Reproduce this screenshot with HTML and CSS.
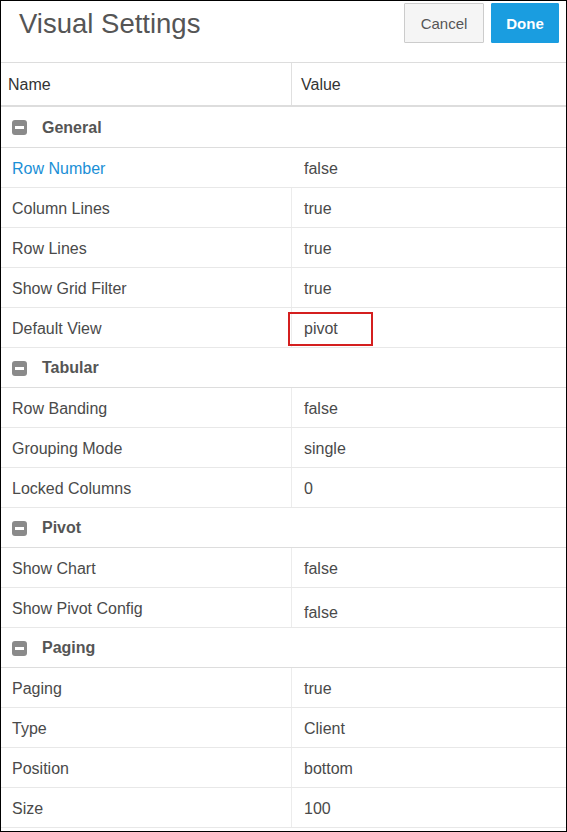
FILE: index.html
```html
<!DOCTYPE html>
<html>
<head>
<meta charset="utf-8">
<link rel="stylesheet" href="styles.css">
</head>
<body>
<div class="dialog">
  <div class="header">
    <div class="title">Visual Settings</div>
    <div class="actions">
      <button class="btn btn-cancel">Cancel</button>
      <button class="btn btn-done">Done</button>
    </div>
  </div>
  <div class="grid">
    <div class="thead">
      <div class="th th-name">Name</div>
      <div class="th th-value">Value</div>
    </div>

    <div class="group group-first"><span class="toggle"></span><span class="group-label">General</span></div>
    <div class="row row-active"><div class="c-name link">Row Number</div><div class="c-value">false</div></div>
    <div class="row"><div class="c-name">Column Lines</div><div class="c-value">true</div></div>
    <div class="row"><div class="c-name">Row Lines</div><div class="c-value">true</div></div>
    <div class="row"><div class="c-name">Show Grid Filter</div><div class="c-value">true</div></div>
    <div class="row"><div class="c-name">Default View</div><div class="c-value"><span class="highlight">pivot</span></div></div>

    <div class="group"><span class="toggle"></span><span class="group-label">Tabular</span></div>
    <div class="row"><div class="c-name">Row Banding</div><div class="c-value">false</div></div>
    <div class="row"><div class="c-name">Grouping Mode</div><div class="c-value">single</div></div>
    <div class="row"><div class="c-name">Locked Columns</div><div class="c-value">0</div></div>

    <div class="group"><span class="toggle"></span><span class="group-label">Pivot</span></div>
    <div class="row"><div class="c-name">Show Chart</div><div class="c-value">false</div></div>
    <div class="row"><div class="c-name">Show Pivot Config</div><div class="c-value low">false</div></div>

    <div class="group"><span class="toggle"></span><span class="group-label">Paging</span></div>
    <div class="row"><div class="c-name">Paging</div><div class="c-value">true</div></div>
    <div class="row"><div class="c-name">Type</div><div class="c-value">Client</div></div>
    <div class="row"><div class="c-name">Position</div><div class="c-value">bottom</div></div>
    <div class="row"><div class="c-name">Size</div><div class="c-value">100</div></div>
  </div>
</div>
</body>
</html>
```
FILE: styles.css
```css
* { box-sizing: border-box; }
html, body { margin: 0; padding: 0; background: #fff; }
body { font-family: "Liberation Sans", Arial, sans-serif; }

.dialog {
  width: 567px;
  height: 832px;
  border: 1px solid #000;
  background: #fff;
  overflow: hidden;
}

.header {
  height: 62px;
  display: flex;
  justify-content: space-between;
  align-items: flex-start;
  border-bottom: 1px solid #ddd;
}
.title {
  font-size: 27.5px;
  color: #555;
  padding: 7px 0 0 18px;
  line-height: 32px;
}
.actions {
  display: flex;
  gap: 7px;
  padding: 2px 7px 0 0;
}
.btn {
  height: 40px;
  font-family: "Liberation Sans", Arial, sans-serif;
  font-size: 15px;
  border-radius: 1px;
  cursor: pointer;
}
.btn-cancel {
  width: 80px;
  background: #f5f5f5;
  border: 1px solid #ccc;
  color: #555;
}
.btn-done {
  width: 68px;
  background: #1a9de0;
  border: 1px solid #1a9de0;
  color: #fff;
  font-weight: bold;
}

.thead {
  display: grid;
  grid-template-columns: 291px 1fr;
  height: 44px;
  border-bottom: 2px solid #ddd;
}
.th {
  font-size: 16px;
  color: #333;
  display: flex;
  align-items: center;
  padding-top: 1px;
}
.th-name { padding-left: 7px; border-right: 1px solid #e0e0e0; }
.th-value { padding-left: 9px; }

.group {
  height: 40px;
  display: flex;
  align-items: center;
  border-bottom: 1px solid #ddd;
  padding: 1px 0 0 11px;
}
.group-first { height: 41px; }
.toggle {
  position: relative;
  width: 15px;
  height: 15px;
  background: #8a8a8a;
  border-radius: 3px;
  margin-right: 15px;
}
.toggle::after {
  content: "";
  position: absolute;
  left: 3px;
  right: 3px;
  top: 6px;
  height: 3px;
  background: #fff;
}
.group-label {
  font-size: 16px;
  font-weight: bold;
  color: #555;
}

.row {
  display: grid;
  grid-template-columns: 291px 1fr;
  height: 40px;
  border-bottom: 1px solid #e8e8e8;
  font-size: 16px;
  color: #4a4a4a;
}
.c-name {
  display: flex;
  align-items: center;
  padding: 2px 0 0 11px;
  border-right: 1px solid #ececec;
}
.row-active .c-name { border-right-color: transparent; }
.c-value {
  display: flex;
  align-items: center;
  padding: 2px 0 0 12px;
}
.c-value.low { padding-top: 10px; }
.link { color: #1a8fd6; }
.highlight {
  display: inline-flex;
  align-items: center;
  width: 85px;
  height: 34px;
  margin-left: -16px;
  padding-left: 14px;
  border: 2px solid #d41f1f;
}
```
